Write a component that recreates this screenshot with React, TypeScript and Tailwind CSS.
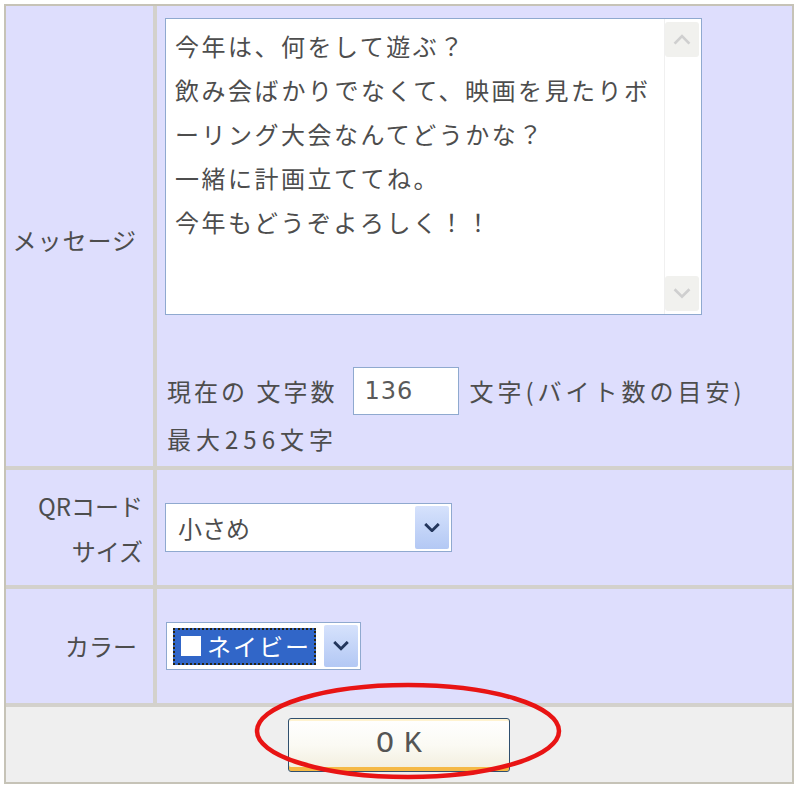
const jp = "font-['Noto_Sans_CJK_JP','Noto_Sans',sans-serif]";

function Chevron({ up = false, color = "#23365c", w = 16, sw = 3 }: { up?: boolean; color?: string; w?: number; sw?: number }) {
  return (
    <svg width={w} height={w * 0.6} viewBox="0 0 16 10" fill="none">
      <polyline
        points={up ? "2,8 8,2 14,8" : "2,2 8,8 14,2"}
        stroke={color}
        strokeWidth={sw}
        strokeLinecap="square"
      />
    </svg>
  );
}

function DropButton() {
  return (
    <div className="w-[34px] self-stretch my-[2px] mr-[2px] rounded-[2px] bg-gradient-to-b from-[#d6e2fc] to-[#b3c8f4] flex items-center justify-center">
      <Chevron />
    </div>
  );
}

const message = [
  "今年は、何をして遊ぶ？",
  "飲み会ばかりでなくて、映画を見たりボ",
  "ーリング大会なんてどうかな？",
  "一緒に計画立ててね。",
  "今年もどうぞよろしく！！",
].join("\n");

export default function App() {
  return (
    <div className={`w-[800px] h-[789px] bg-white pt-[4px] pl-[4px] ${jp} text-[#4d4d4d]`}>
      <div className="relative w-[790px] h-[780px] border-2 border-[#c6c3b7] bg-[#d3d1cc] grid grid-cols-[147px_635px] grid-rows-[460px_115px_114px_75px] gap-[4px]">
        {/* メッセージ */}
        <div className="bg-[#dedefd] flex items-center justify-end pr-[16px] pt-[8px] text-[24px] tracking-[1px]">
          メッセージ
        </div>
        <div className="bg-[#dedefd] pl-[8px] pt-[12px]">
          <div className="w-[537px] h-[297px] border border-[#8fa9cf] bg-white flex">
            <textarea
              readOnly
              value={message}
              className="flex-1 resize-none overflow-hidden outline-none pl-[9px] pt-[5px] text-[24px] leading-[44px] tracking-[2.5px] whitespace-pre text-[#4d4d4d]"
            />
            <div className="w-[37px] border-l border-[#f0f0f0] flex flex-col justify-between py-[3px] pr-[2px]">
              <div className="h-[35px] rounded-[3px] bg-[#f1f1ee] flex items-center justify-center">
                <Chevron up color="#cfcfcf" w={18} sw={2.5} />
              </div>
              <div className="h-[35px] rounded-[3px] bg-[#f1f1ee] flex items-center justify-center">
                <Chevron color="#cfcfcf" w={18} sw={2.5} />
              </div>
            </div>
          </div>
          <div className="mt-[52px] pl-[2px] flex items-center h-[48px] text-[24px] tracking-[3px]">
            <span>現在の 文字数</span>
            <div className="ml-[16px] w-[106px] h-[48px] border border-[#8fa9cf] bg-white flex items-center pl-[10px] text-[24px] tracking-[1px] font-['DejaVu_Sans',sans-serif] text-[#5a5a5a]">
              136
            </div>
            <span className="ml-[10px] tracking-[4px]">文字(バイト数の目安)</span>
          </div>
          <div className="mt-[7px] pl-[2px] leading-[34px] text-[24px] tracking-[5px]">最大256文字</div>
        </div>

        {/* QRコードサイズ */}
        <div className="bg-[#dedefd] flex flex-col items-end justify-center pr-[10px] text-[24px] leading-[45px]">
          <span>QRコード</span>
          <span>サイズ</span>
        </div>
        <div className="bg-[#dedefd] pl-[8px] flex items-center">
          <div className="w-[287px] h-[49px] border border-[#8fa9cf] bg-white flex items-center">
            <span className="flex-1 pl-[12px] text-[24px]">小さめ</span>
            <DropButton />
          </div>
        </div>

        {/* カラー */}
        <div className="bg-[#dedefd] flex items-center justify-end pr-[16px] text-[24px]">カラー</div>
        <div className="bg-[#dedefd] pl-[9px] flex items-center">
          <div className="w-[195px] h-[48px] border border-[#8fa9cf] bg-white flex items-center">
            <div className="ml-[6px] w-[143px] h-[37px] bg-[#3166c8] border-2 border-dotted border-[#2a2410] flex items-center pl-[6px] gap-[6px] text-white text-[24px]">
              <span className="w-[20px] h-[20px] bg-white" />
              <span className="tracking-[2px]">ネイビー</span>
            </div>
            <div className="flex-1" />
            <DropButton />
          </div>
        </div>

        {/* OK */}
        <div className="col-span-2 bg-[#efefef] flex items-center justify-center">
          <button className="w-[222px] h-[54px] rounded-[3px] border border-[#2f4f6e] bg-gradient-to-b from-white via-[#fbfaf4] to-[#f2eedc] shadow-[inset_0_-4px_0_#f5b945,inset_0_2px_0_#fff3d0] flex items-center justify-center font-['Liberation_Mono',monospace] text-[30px] tracking-[10px] pl-[10px] text-[#555]">
            OK
          </button>
        </div>

        <svg className="absolute left-[245px] top-[672px] pointer-events-none" width="316" height="106" viewBox="0 0 316 106">
          <ellipse cx="157" cy="53" rx="151" ry="46" fill="none" stroke="#e81414" strokeWidth="4.5" />
        </svg>
      </div>
    </div>
  );
}
